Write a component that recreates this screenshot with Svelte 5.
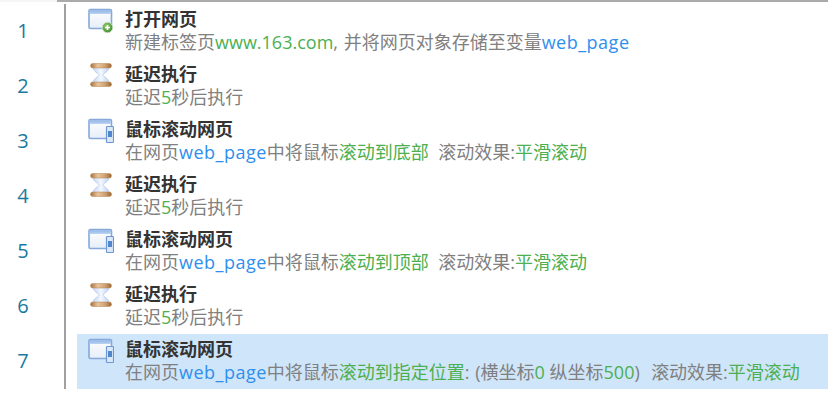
<script>
	const open = 'open';
	const wait = 'wait';
	const scroll = 'scroll';

	// g = green value, b = blue variable, plain strings stay grey
	const delay = { icon: wait, title: '延迟执行', parts: ['延迟', { g: '5' }, '秒后执行'] };
	const rows = [
		{
			icon: open,
			title: '打开网页',
			parts: ['新建标签页', { g: 'www.163.com' }, { c: ', ' }, '并将网页对象存储至变量', { b: 'web_page' }]
		},
		delay,
		{
			icon: scroll,
			title: '鼠标滚动网页',
			parts: ['在网页', { b: 'web_page' }, '中将鼠标', { g: '滚动到底部' }, '  滚动效果:', { g: '平滑滚动' }]
		},
		delay,
		{
			icon: scroll,
			title: '鼠标滚动网页',
			parts: ['在网页', { b: 'web_page' }, '中将鼠标', { g: '滚动到顶部' }, '  滚动效果:', { g: '平滑滚动' }]
		},
		delay,
		{
			icon: scroll,
			title: '鼠标滚动网页',
			selected: true,
			parts: [
				'在网页',
				{ b: 'web_page' },
				'中将鼠标',
				{ g: '滚动到指定位置' },
				{ c: ': (' },
				'横坐标',
				{ g: '0' },
				' 纵坐标',
				{ g: '500' },
				{ c: ')  ' },
				'滚动效果:',
				{ g: '平滑滚动' }
			]
		}
	];
</script>

<div class="page">
	<div class="topbar"><div class="corner"></div></div>
	<svg class="defs" width="0" height="0">
		<defs>
			<linearGradient id="cap" x1="0" y1="0" x2="1" y2="0">
				<stop offset="0" stop-color="#a8703c" />
				<stop offset="0.35" stop-color="#e8c49c" />
				<stop offset="0.7" stop-color="#d0a070" />
				<stop offset="1" stop-color="#9a6534" />
			</linearGradient>
			<linearGradient id="glass" x1="0" y1="0" x2="1" y2="0">
				<stop offset="0" stop-color="#c4d8f6" />
				<stop offset="0.5" stop-color="#f4f8ff" />
				<stop offset="1" stop-color="#bcd2f4" />
			</linearGradient>
			<linearGradient id="head" x1="0" y1="0" x2="0" y2="1">
				<stop offset="0" stop-color="#8fb4e6" />
				<stop offset="1" stop-color="#bcd4f2" />
			</linearGradient>
			<linearGradient id="pane" x1="0" y1="0" x2="0" y2="1">
				<stop offset="0" stop-color="#ffffff" />
				<stop offset="1" stop-color="#e6eef9" />
			</linearGradient>
			<radialGradient id="plus" cx="0.4" cy="0.35" r="0.7">
				<stop offset="0" stop-color="#8ecb6a" />
				<stop offset="1" stop-color="#3f8a32" />
			</radialGradient>
		</defs>
	</svg>
	<div class="list">
		<div class="numbers">
			{#each rows as _, i}
				<div class="num">{i + 1}</div>
			{/each}
		</div>
		<div class="steps">
			{#each rows as row}
				<div class="row" class:selected={row.selected}>
					<div class="icon">
						{#if row.icon === 'wait'}
							<svg width="26" height="26" viewBox="0 0 26 26">
								<path d="M5 4 C5 9 11 10 11 12 C11 14 5 15 5 20 L21 20 C21 15 15 14 15 12 C15 10 21 9 21 4 Z" fill="url(#glass)" stroke="#b4c8e8" stroke-width="0.8" />
								<rect x="2.5" y="0.5" width="21" height="4.5" rx="2.2" fill="url(#cap)" stroke="#b08450" stroke-width="0.5" />
								<rect x="2.5" y="19" width="21" height="4.5" rx="2.2" fill="url(#cap)" stroke="#b08450" stroke-width="0.5" />
							</svg>
						{:else}
							<svg width="26" height="26" viewBox="0 0 26 26">
								<rect x="1" y="1.5" width="22.5" height="19" rx="1.5" fill="url(#pane)" stroke="#86a9da" stroke-width="1.6" />
								<rect x="1.8" y="2.2" width="21" height="3.8" fill="url(#head)" />
								{#if row.icon === 'open'}
									<circle cx="19.5" cy="19.5" r="5.2" fill="url(#plus)" stroke="#cfe3c8" stroke-width="0.8" />
									<path d="M17 19.5h5M19.5 17v5" stroke="#fff" stroke-width="1.7" />
								{:else}
									<rect x="18.5" y="8.5" width="7" height="16" rx="0.8" fill="#dbe8f9" stroke="#6f98d2" stroke-width="1.2" />
									<rect x="20" y="13" width="4" height="6" fill="#4f86cc" />
								{/if}
							</svg>
						{/if}
					</div>
					<div class="text">
						<div class="title">{row.title}</div>
						<div class="desc">
							{#each row.parts as part}
								{#if part.g}<span class="green">{part.g}</span>
								{:else if part.b}<span class="blue">{part.b}</span>
								{:else if part.c}<span class="punct">{part.c}</span>
								{:else}{part}{/if}
							{/each}
						</div>
					</div>
				</div>
			{/each}
		</div>
	</div>
</div>

<style>
	:global(body) {
		margin: 0;
		background: #fff;
	}

	.page {
		width: 828px;
		height: 407px;
		overflow: hidden;
		font-family: 'Open Sans', 'Noto Sans CJK SC', sans-serif;
	}

	.topbar {
		height: 2px;
		padding-left: 57px;
		background: #aaaaaa;
		background-clip: content-box;
		position: relative;
	}

	.corner {
		position: absolute;
		left: 0;
		top: 0;
		width: 57px;
		height: 2px;
		background: #f6f6f6;
	}

	.defs {
		display: block;
		height: 0;
	}

	.list {
		display: flex;
		margin-top: 2px;
	}

	.numbers {
		width: 64px;
		flex: none;
	}

	.num {
		height: 55px;
		width: 46px;
		display: flex;
		align-items: center;
		justify-content: center;
		padding-bottom: 2px;
		box-sizing: border-box;
		font-size: 20px;
		color: #1a7a9e;
	}

	.steps {
		flex: 1;
		border-left: 2px solid #a0a0a0;
		padding-left: 11px;
	}

	.row {
		height: 55px;
		display: flex;
		box-sizing: border-box;
		padding: 4px 0 0 11px;
		gap: 11px;
	}

	.row.selected {
		background: #cfe5fa;
	}

	.icon {
		width: 26px;
		height: 26px;
		flex: none;
	}

	.text {
		min-width: 0;
	}

	.title {
		font-size: 18px;
		line-height: 23px;
		font-weight: 700;
		color: #333333;
		white-space: nowrap;
	}

	.desc {
		font-size: 18px;
		line-height: 23px;
		color: #808080;
		white-space: pre;
	}

	.green {
		color: #4caf50;
	}

	.blue {
		color: #2f8fee;
		letter-spacing: 0.5px;
	}

	.punct {
		word-spacing: 1px;
	}
</style>
